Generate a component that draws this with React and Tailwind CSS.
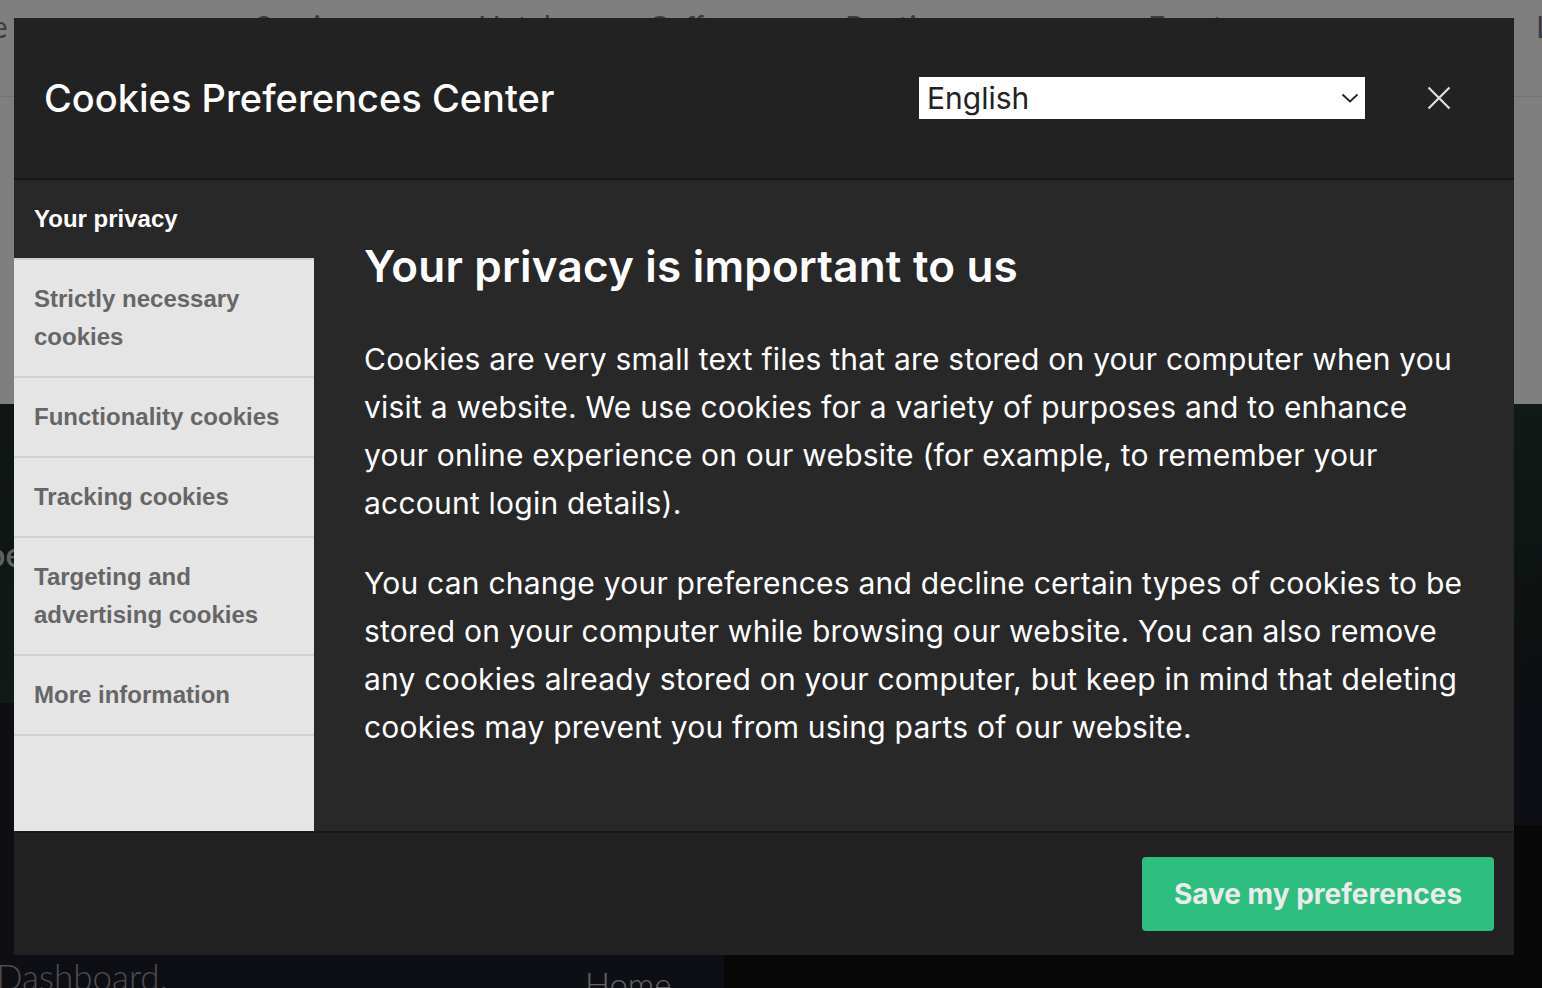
import React from 'react';

const NAV_WORDS = [
    { label: 'Schedule', className: 'w-[367px] ml-[-112px]' },
    { label: 'Services', className: 'w-[223px]' },
    { label: 'Hotels', className: 'w-[170px]' },
    { label: 'Coffee', className: 'w-[197px]' },
    { label: 'Boutiques', className: 'w-[303px]' },
    { label: 'Events', className: 'w-[336px]' },
];

const SECTIONS = [
    ['Strictly necessary', 'cookies'],
    ['Functionality cookies'],
    ['Tracking cookies'],
    ['Targeting and', 'advertising cookies'],
    ['More information'],
];

const lato = { fontFamily: 'Lato, "Noto Sans", sans-serif' };

const BackgroundPage = () => (
    <div className="flex flex-col w-full h-full">
        <div className="h-[97px] bg-white border-b border-[#e6e6e6] flex items-start pt-[6px] overflow-hidden">
            {NAV_WORDS.map(w => (
                <span
                    key={w.label}
                    className={`${w.className} shrink-0 text-[30px] leading-[40px] text-[#76768e] whitespace-nowrap`}
                    style={lato}
                >
                    {w.label}
                </span>
            ))}
            <svg className="shrink-0 mt-[12px]" width="52" height="30" viewBox="0 0 52 30" fill="none">
                <circle cx="10" cy="10" r="6" stroke="#76768e" strokeWidth="2.5" />
                <path d="M1 28 C2 19 18 19 19 28" stroke="#76768e" strokeWidth="2.5" />
            </svg>
            <span className="shrink-0 text-[30px] leading-[40px] text-[#76768e] whitespace-nowrap" style={lato}>Login</span>
        </div>
        <div className="h-[307px] bg-white" />
        <div className="h-[299px] bg-gradient-to-br from-[#1c2a28] via-[#22342c] to-[#181e20] flex items-center overflow-hidden">
            <span className="ml-[-14px] text-[34px] text-[#bfc4c0] font-semibold" style={lato}>oe</span>
        </div>
        <div className="flex-1 flex">
            <div className="w-[724px] bg-[#1a1e28] flex items-end">
                <span className="ml-[-4px] mb-[-12px] text-[35px] leading-[48px] text-[#9a9aa0] font-light" style={lato}>Dashboard.</span>
            </div>
            <div className="flex-1 flex flex-col">
                <div className="h-[122px] bg-[#1a1e28]" />
                <div className="flex-1 bg-[#101010]" />
            </div>
        </div>
    </div>
);

const App = () => {
    const inter = { fontFamily: 'Inter, "Noto Sans", sans-serif' };
    const arial = { fontFamily: '"Liberation Sans", Arial, sans-serif' };

    return (
        <div className="relative w-full h-[988px] overflow-hidden">
            <BackgroundPage />
            <div className="absolute left-[585px] top-[962px] text-[33px] leading-[44px] text-[#c8c8cc] font-light" style={lato}>Home</div>

            {/* overlay */}
            <div className="absolute inset-0 bg-black/50" />

            {/* modal */}
            <div className="absolute left-[14px] top-[18px] w-[1500px] h-[937px] flex flex-col bg-[#282828]" style={inter}>
                <div className="h-[162px] bg-[#222222] border-b-2 border-[#181818] flex items-center pl-[30px]">
                    <h1 className="text-[38px] font-medium text-white">Cookies Preferences Center</h1>
                    <div className="ml-auto w-[446px] h-[42px] bg-white flex items-center pl-[8px] pr-[6px]">
                        <span className="text-[30px] text-[#222] leading-none">English</span>
                        <svg className="ml-auto" width="18" height="12" viewBox="0 0 18 12" fill="none">
                            <path d="M1.5 2.5 L9 9.5 L16.5 2.5" stroke="#222" strokeWidth="1.8" />
                        </svg>
                    </div>
                    <button className="ml-[62px] mr-[63px] w-[24px] h-[24px] flex items-center justify-center">
                        <svg width="24" height="24" viewBox="0 0 24 24" fill="none">
                            <path d="M1.5 1.5 L22.5 22.5 M22.5 1.5 L1.5 22.5" stroke="#e0e0e0" strokeWidth="2.2" />
                        </svg>
                    </button>
                </div>

                <div className="h-[651px] flex">
                    <div className="w-[300px] flex flex-col" style={arial}>
                        <div className="h-[78px] flex items-center pl-5 text-[24px] font-bold text-white">Your privacy</div>
                        {SECTIONS.map(lines => (
                            <div key={lines.join(' ')} className="bg-[#e5e5e5] border-t-2 border-[#d0d0d0] px-5 py-5 text-[24px] leading-[38px] font-bold text-[#666666]">
                                {lines.map(l => <div key={l}>{l}</div>)}
                            </div>
                        ))}
                        <div className="flex-1 bg-[#e5e5e5] border-t-2 border-[#d0d0d0]" />
                    </div>
                    <div className="flex-1 pl-[50px] pr-[48px] pt-[60px] text-white">
                        <h2 className="text-[44px] leading-[53px] font-semibold tracking-[0.2px] mb-[42px]">Your privacy is important to us</h2>
                        <p className="text-[30px] leading-[48px] tracking-[0.22px] mb-[32px]">
                            Cookies are very small text files that are stored on your computer when you visit a website. We use cookies for a variety of purposes and to enhance your online experience on our website (for example, to remember your account login details).
                        </p>
                        <p className="text-[30px] leading-[48px] tracking-[0.22px]">
                            You can change your preferences and decline certain types of cookies to be stored on your computer while browsing our website. You can also remove any cookies already stored on your computer, but keep in mind that deleting cookies may prevent you from using parts of our website.
                        </p>
                    </div>
                </div>

                <div className="flex-1 bg-[#222222] border-t-2 border-[#181818] flex items-center justify-end pr-5">
                    <button className="w-[352px] h-[74px] rounded-[4px] bg-[#2ebe80] text-[28px] font-bold text-[#ebebeb]">
                        Save my preferences
                    </button>
                </div>
            </div>
        </div>
    );
};

export default App;
